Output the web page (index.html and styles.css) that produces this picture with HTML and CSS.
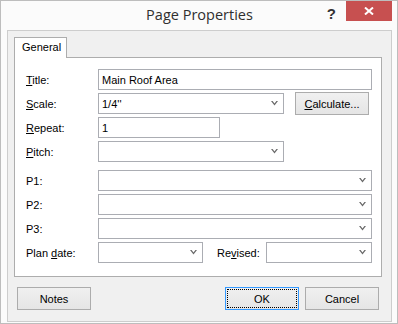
FILE: index.html
```
<!DOCTYPE html>
<html>
<head>
<meta charset="utf-8">
<link rel="stylesheet" href="styles.css">
</head>
<body>
<div class="window">
  <div class="titlebar">
    <div class="title">Page Properties</div>
    <div class="controls">
      <span class="help">?</span>
      <div class="close">
        <svg width="10" height="8" viewBox="0 0 10 8"><path d="M1 0.5 L9 7.5 M9 0.5 L1 7.5" stroke="#fff" stroke-width="2"/></svg>
      </div>
    </div>
  </div>
  <div class="client">
    <div class="tabs"><div class="tab">General</div></div>
    <div class="panel">
      <div class="row">
        <span class="label"><u>T</u>itle:</span>
        <div class="field w-full">Main Roof Area</div>
      </div>
      <div class="row">
        <span class="label"><u>S</u>cale:</span>
        <div class="field combo w-mid"><span>1/4''</span><svg class="chev" width="7" height="5" viewBox="0 0 7 5"><path d="M0 0 H1.6 L3.5 2.4 L5.4 0 H7 L3.5 4.6 Z" fill="#6a6a6a"/></svg></div>
        <div class="btn calc"><span><u>C</u>alculate...</span></div>
      </div>
      <div class="row">
        <span class="label"><u>R</u>epeat:</span>
        <div class="field w-repeat">1</div>
      </div>
      <div class="row">
        <span class="label"><u>P</u>itch:</span>
        <div class="field combo w-mid"><span></span><svg class="chev" width="7" height="5" viewBox="0 0 7 5"><path d="M0 0 H1.6 L3.5 2.4 L5.4 0 H7 L3.5 4.6 Z" fill="#6a6a6a"/></svg></div>
      </div>
      <div class="row gap-top">
        <span class="label">P1:</span>
        <div class="field combo w-full"><span></span><svg class="chev" width="7" height="5" viewBox="0 0 7 5"><path d="M0 0 H1.6 L3.5 2.4 L5.4 0 H7 L3.5 4.6 Z" fill="#6a6a6a"/></svg></div>
      </div>
      <div class="row">
        <span class="label">P2:</span>
        <div class="field combo w-full"><span></span><svg class="chev" width="7" height="5" viewBox="0 0 7 5"><path d="M0 0 H1.6 L3.5 2.4 L5.4 0 H7 L3.5 4.6 Z" fill="#6a6a6a"/></svg></div>
      </div>
      <div class="row">
        <span class="label">P3:</span>
        <div class="field combo w-full"><span></span><svg class="chev" width="7" height="5" viewBox="0 0 7 5"><path d="M0 0 H1.6 L3.5 2.4 L5.4 0 H7 L3.5 4.6 Z" fill="#6a6a6a"/></svg></div>
      </div>
      <div class="row">
        <span class="label">Plan <u>d</u>ate:</span>
        <div class="field combo w-plan"><span></span><svg class="chev" width="7" height="5" viewBox="0 0 7 5"><path d="M0 0 H1.6 L3.5 2.4 L5.4 0 H7 L3.5 4.6 Z" fill="#6a6a6a"/></svg></div>
        <span class="label rev-label">Re<u>v</u>ised:</span>
        <div class="field combo w-rev"><span></span><svg class="chev" width="7" height="5" viewBox="0 0 7 5"><path d="M0 0 H1.6 L3.5 2.4 L5.4 0 H7 L3.5 4.6 Z" fill="#6a6a6a"/></svg></div>
      </div>
    </div>
    <div class="buttons">
      <div class="btn">Notes</div>
      <div class="btn-group">
        <div class="btn ok"><span class="focus">OK</span></div>
        <div class="btn">Cancel</div>
      </div>
    </div>
  </div>
</div>
</body>
</html>
```
FILE: styles.css
```
html, body {
  margin: 0;
  padding: 0;
  background: #ffffff;
}
body {
  font-family: "Liberation Sans", Arial, sans-serif;
  font-size: 11px;
  color: #000;
}
.window {
  width: 398px;
  height: 324px;
  box-sizing: border-box;
  border: 1px solid #bdbdbd;
  background: #fbfbfb;
  display: flex;
  flex-direction: column;
}
.titlebar {
  height: 29px;
  display: grid;
  grid-template-columns: 1fr auto 1fr;
  align-items: start;
}
.title {
  grid-column: 2;
  font-family: "Open Sans", "Noto Sans", sans-serif;
  font-size: 14.5px;
  line-height: 28px;
  color: #2f2f2f;
  padding-left: 1px;
}
.controls {
  grid-column: 3;
  justify-self: end;
  display: flex;
  align-items: flex-start;
}
.help {
  font-family: "Liberation Sans", Arial, sans-serif;
  font-weight: bold;
  font-size: 15px;
  line-height: 15px;
  color: #333;
  margin-top: 5px;
  margin-right: 10px;
}
.close {
  width: 46px;
  height: 20px;
  background: #c75050;
  margin-right: 5px;
  display: flex;
  align-items: center;
  justify-content: center;
}
.client {
  flex: 1;
  margin: 0 5px 1px 6px;
  border: 1px solid #cdcdcd;
  background: #f0f0f0;
  padding: 6px 9px 11px 6px;
  display: flex;
  flex-direction: column;
}
.tabs {
  display: flex;
  align-items: flex-start;
  height: 20px;
}
.tab {
  position: relative;
  z-index: 1;
  width: 53px;
  height: 21px;
  box-sizing: border-box;
  border: 1px solid #adadad;
  border-bottom: none;
  background: #fff;
  padding-left: 7px;
  line-height: 19px;
}
.panel {
  height: 220px;
  box-sizing: border-box;
  border: 1px solid #adadad;
  background: #fff;
  padding: 11px 9px 0 11px;
}
.row {
  display: flex;
  align-items: center;
  height: 21px;
  margin-bottom: 3px;
}
.row.gap-top {
  margin-top: 8px;
}
.label {
  width: 72px;
  flex: none;
}
.rev-label {
  width: 49px;
  margin-left: 14px;
}
.field {
  box-sizing: border-box;
  height: 21px;
  border: 1px solid #abadb3;
  background: #fff;
  padding: 0 2px 0 3px;
  display: flex;
  align-items: center;
  flex: none;
}
.combo {
  justify-content: space-between;
  padding-right: 5px;
}
.chev {
  display: block;
}
.w-full { width: 274px; }
.w-mid { width: 186px; }
.w-repeat { width: 122px; }
.w-plan { width: 105px; }
.w-rev { width: 106px; }
.btn {
  width: 74px;
  height: 23px;
  box-sizing: border-box;
  border: 1px solid #acacac;
  background: linear-gradient(#f0f0f0, #e5e5e5);
  display: flex;
  align-items: center;
  justify-content: center;
  flex: none;
}
.calc {
  margin-left: 11px;
}
.buttons {
  display: flex;
  justify-content: space-between;
  margin-top: 10px;
  padding: 0 3px;
}
.btn-group {
  display: flex;
  gap: 6px;
}
.ok {
  border-color: #3399ff;
  padding: 1px;
  align-items: stretch;
}
.focus {
  flex: 1;
  border: 1px dotted #000;
  display: flex;
  align-items: center;
  justify-content: center;
}
```
